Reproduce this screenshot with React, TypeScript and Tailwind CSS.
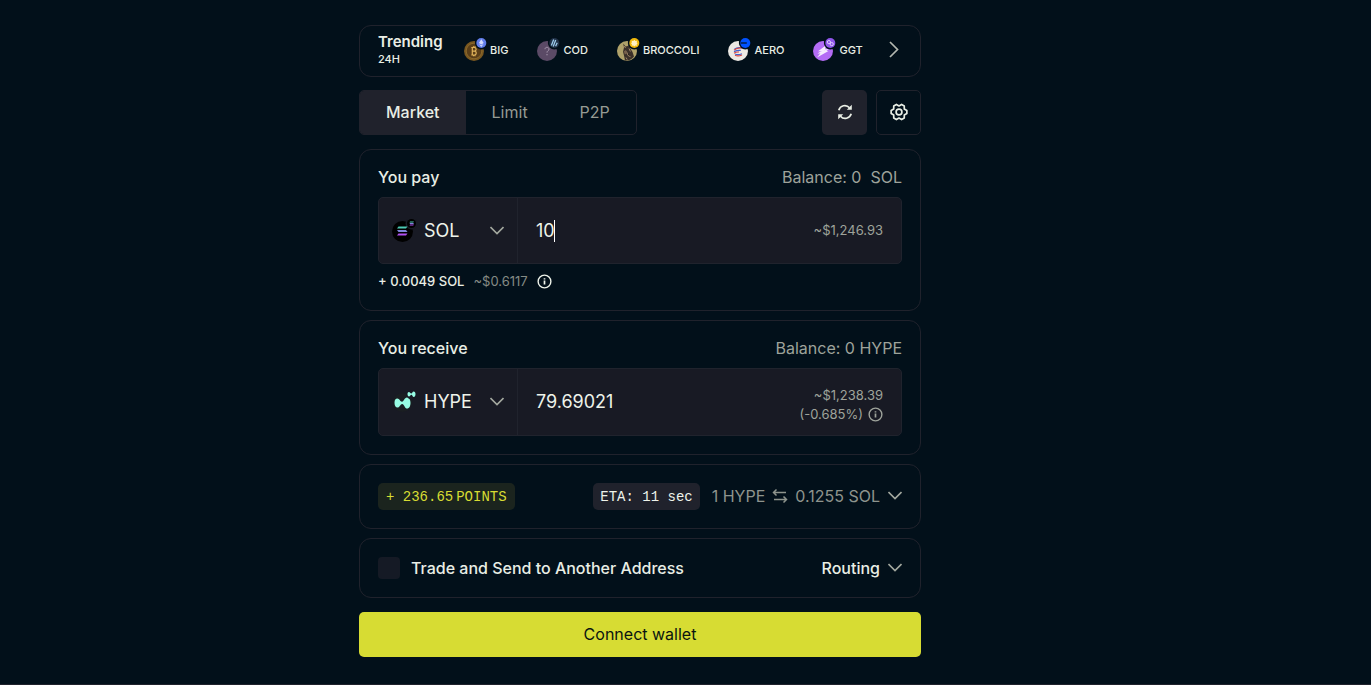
import React, { useState } from 'react';

const TABS = ['Market', 'Limit', 'P2P'];

function Chevron({ className = '' }: { className?: string }) {
  return (
    <svg className={`shrink-0 ${className}`} width="14" height="16" viewBox="0 0 14 16" fill="none" stroke="#a3a89f" strokeWidth="1.6" aria-hidden="true">
      <path d="M.5 4 7 10.5 13.5 4" />
    </svg>
  );
}

function InfoIcon({ size, color }: { size: number; color: string }) {
  return (
    <svg className="shrink-0" width={size} height={size} viewBox="0 0 16 16" fill="none" stroke={color} strokeWidth="1.5" aria-hidden="true">
      <circle cx="8" cy="8" r="6.8" />
      <path d="M8 7v4.3M8 4.4v1.5" strokeWidth="1.8" />
    </svg>
  );
}

// Round token logo with a small network badge cut into its top right corner
function TokenIcon({ children, badge, badgeColor }: { children: React.ReactNode; badge: React.ReactNode; badgeColor: string }) {
  return (
    <svg className="shrink-0" width="24" height="24" viewBox="0 0 24 24" aria-hidden="true">
      {children}
      <circle cx="17.3" cy="6" r="6.4" fill="#02101a" />
      <circle cx="17.3" cy="6" r="5" fill={badgeColor} />
      {badge}
    </svg>
  );
}

function BigIcon() {
  return (
    <TokenIcon badgeColor="#627eea" badge={<path d="M17.3 2.2 14.9 6l2.4 1.4L19.7 6zM15 6.9l2.3 3.1 2.3-3.1-2.3 1.3z" fill="#d5dcfb" />}>
      <circle cx="10" cy="14" r="10" fill="#7a5820" />
      <circle cx="10" cy="14" r="7.8" fill="#5a3e18" stroke="#8a682b" />
      <path d="M8.3 10.500v7.500M7.300 10.500h3a1.800 1.800 0 0 1 0 3.600H8.300h2.400a2 2 0 0 1 0 3.900H7.300M9.500 9.200v1.300M11 9.200v1.300M9.500 18v1.200M11 18v1.200" fill="none" stroke="#e0b35a" strokeWidth="1.200" />
    </TokenIcon>
  );
}

function CodIcon() {
  return (
    <TokenIcon badgeColor="#213147" badge={<path d="m14.4 8.6 2.3-6M16.2 9.5l2.5-6.5M18.6 9.2l1.6-3.4" stroke="#9dcced" strokeWidth="1.3" />}>
      <circle cx="10" cy="14" r="10" fill="#5b4a66" />
      <path d="M8 12.2c0-2.600 4-2.500 4 0 0 1.600-2 1.400-2 3.400M10 17v1.300" fill="none" stroke="#a89ab0" strokeWidth="1" />
    </TokenIcon>
  );
}

function BroccoliIcon() {
  return (
    <TokenIcon badgeColor="#f0b90b" badge={<path d="m17.3 2.8 1 1.3 1.8-.4-.5 1.5 1 1-1 1 .4 1.5-1.7-.3-1 1.2-1-1.2-1.7.3.4-1.5-1-1 1-1-.5-1.5 1.8.4z" fill="#fff1c2" />}>
      <circle cx="10" cy="14" r="10" fill="#b0a26a" />
      <path d="M6.200 6.500 8.600 9.500l2.200-.4 1.700-2.600.6 4.500 2.400 4 1.500 4.500a10 10 0 0 1-9 4L7 18.500l-1-3.800L7 10.500z" fill="#3b3029" />
      <path d="m7.300 9 1.200 2M9.500 14.500l1.600 4 2.400 1.200M12 11.500l1.400 3M9 20.500l1.200 2" stroke="#a58a6b" strokeWidth="1" />
      <path d="M6.800 14.200 9 13l1 3.400-2.200 1.200z" fill="#77604b" />
    </TokenIcon>
  );
}

function AeroIcon() {
  return (
    <TokenIcon badgeColor="#0052ff" badge={<path d="M13 6h5.8" stroke="#02101a" strokeWidth="1.2" />}>
      <circle cx="10" cy="14" r="10" fill="#ece9e4" />
      <path d="M6.500 12.200c2-1.800 4.500-2 7.500-1.400M6 14.600c2-1 4-1.500 6.800-1.200M7 17c2 1 4.500.8 7-.3" fill="none" stroke="#3d63d2" strokeWidth="1.200" />
      <path d="M6 13.200c2.200-2 4.700-2.600 8-2.300M6 16.200c1.400-1 3.200-1.400 5-1.200M7 18.200c2 1 4.500.8 7-.2" fill="none" stroke="#d9433f" strokeWidth="1.100" />
    </TokenIcon>
  );
}

function GgtIcon() {
  return (
    <TokenIcon
      badgeColor="#8f55ea"
      badge={
        <g fill="none" stroke="#e6d8fd" strokeWidth="0.9">
          <circle cx="15.9" cy="5.1" r="1.6" />
          <circle cx="18.7" cy="7.1" r="1.6" />
        </g>
      }
    >
      <circle cx="10" cy="14" r="10" fill="#b46cf5" />
      <path d="M13.500 8 5 14.200h4L4 20.500l11.500-6.500h-4z" fill="#f6eefe" />
      <path d="M9 12.200h6.800l-3 2.400zM4.500 16.600l3.500-2.400h3.500l-2 2.400z" fill="#f6eefe" />
    </TokenIcon>
  );
}

function SolBars() {
  return (
    <>
      <path d="M2 0h9L9.500 2H.5z" fill="#4cc9b4" />
      <path d="M.5 3.500h9L11 5.500H2z" fill="#7f84da" />
      <path d="M2 7h9L9.500 9H.5z" fill="#b24ff0" />
    </>
  );
}

function SolIcon() {
  return (
    <svg className="shrink-0" width="26" height="24" viewBox="0 0 26 24" aria-hidden="true">
      <circle cx="10.5" cy="12.5" r="10.5" fill="#000" />
      <circle cx="19.5" cy="4.5" r="6" fill="#181a24" />
      <circle cx="19.5" cy="4.5" r="4.5" fill="#000" />
      <g transform="translate(4.5 7.5)">
        <SolBars />
      </g>
      <g transform="translate(17.3 2.6) scale(0.42)">
        <SolBars />
      </g>
    </svg>
  );
}

function HypeShape() {
  return (
    <path d="M0 5.200C0 2.400 1.200 1 2.800 1c2.300 0 2.800 3.200 4.700 3.200C9.500 4.200 9.900 0 12.400 0 14.600 0 16 2.400 16 5.200 16 8.500 14.800 11 12.700 11 10.200 11 9.700 6.400 7.700 6.400 5.800 6.400 5.200 10 3 10 1.200 10 0 8.200 0 5.200z" fill="#97fce4" />
  );
}

function HypeIcon() {
  return (
    <svg className="shrink-0" width="26" height="24" viewBox="0 0 26 24" aria-hidden="true">
      <circle cx="10.5" cy="12.5" r="9.5" fill="#1a1e22" />
      <g transform="translate(2.5 7.5)">
        <HypeShape />
      </g>
      <circle cx="19.5" cy="4.5" r="5" fill="#181a24" />
      <g transform="translate(15.5 1.5) scale(0.5)">
        <HypeShape />
      </g>
    </svg>
  );
}

const TRENDING = [
  { symbol: 'BIG', icon: <BigIcon /> },
  { symbol: 'COD', icon: <CodIcon /> },
  { symbol: 'BROCCOLI', icon: <BroccoliIcon /> },
  { symbol: 'AERO', icon: <AeroIcon /> },
  { symbol: 'GGT', icon: <GgtIcon /> },
];

function TokenSelect({ symbol, icon }: { symbol: string; icon: React.ReactNode }) {
  return (
    <button type="button" className="flex w-[139px] shrink-0 items-center border-r border-[#20232d] px-[13px] text-lg text-[#eef3ea]">
      {icon}
      <span className="ml-1.5">{symbol}</span>
      <Chevron className="ml-auto" />
    </button>
  );
}

export default function App() {
  const [tab, setTab] = useState('Market');
  const [amount, setAmount] = useState('10');
  const [otherAddress, setOtherAddress] = useState(false);

  return (
    <div className="flex min-h-screen flex-col bg-[#02101a] font-['Inter','Liberation_Sans',sans-serif] text-base text-[#e9eee5]">
      <main className="flex flex-1 justify-center pt-[25px] pb-[27px] lg:pr-[91px]">
        <div className="w-full max-w-[562px]">
          <section className="flex h-[52px] items-center rounded-xl border border-[#20222c] px-[18px] pb-1">
            <div className="w-[86px] shrink-0">
              <h2 className="text-[15px] font-semibold leading-5">Trending</h2>
              <p className="text-[11px] font-medium leading-[14px]">24H</p>
            </div>
            <ul className="flex gap-[29px]">
              {TRENDING.map((t) => (
                <li key={t.symbol}>
                  <a href="#" className="flex items-center gap-0.5 text-[11px] font-medium">
                    {t.icon}
                    <span className="pt-0.5">{t.symbol}</span>
                  </a>
                </li>
              ))}
            </ul>
            <button type="button" aria-label="Next tokens" className="ml-auto">
              <svg width="18" height="18" viewBox="0 0 18 18" fill="none" stroke="#b4b8b0" strokeWidth="1.7">
                <path d="m6 2 7.500 7.500L6 17" />
              </svg>
            </button>
          </section>

          <div className="mt-[13px] flex items-center gap-[9px]">
            <div className="mr-auto flex h-[45px] overflow-hidden rounded-[5px] border border-[#20222c]">
              {TABS.map((name) => (
                <button
                  key={name}
                  type="button"
                  onClick={() => setTab(name)}
                  className={`px-[26px] pb-0.5 ${tab === name ? 'bg-[#20222c] font-medium' : 'text-[#969b93]'}`}
                >
                  {name}
                </button>
              ))}
            </div>
            <button type="button" aria-label="Refresh quote" className="flex size-[45px] items-center justify-center rounded-[5px] bg-[#20222c] pb-0.5">
              <svg width="18" height="18" viewBox="0 0 18 18" fill="none" stroke="#e9eee5" strokeWidth="1.7">
                <path d="M2.800 7.200A6.200 6.200 0 0 1 13.500 4.800M15.200 10.800A6.200 6.200 0 0 1 4.500 13.200" />
                <path d="M15.800 1.800v5h-5zM2.200 16.200v-5h5z" fill="#e9eee5" stroke="none" />
              </svg>
            </button>
            <button type="button" aria-label="Settings" className="flex size-[45px] items-center justify-center rounded-[5px] border border-[#20222c] pb-0.5">
              <svg width="18" height="18" viewBox="0 0 18 18" fill="none" stroke="#e9eee5" strokeWidth="1.7" strokeLinejoin="round">
                <path d="M16.850 7.470v3.060l-2.570 1.520-.03 2.990-2.650 1.520L9 15.100l-2.600 1.460-2.650-1.520-.03-2.990-2.570-1.520V7.470l2.570-1.520.03-2.990L6.400 1.440 9 2.900l2.600-1.460 2.650 1.520.03 2.990z" />
                <circle cx="9" cy="9" r="2.9" />
              </svg>
            </button>
          </div>

          <section className="mt-3.5 rounded-xl border border-[#20222c] px-[18px] pt-[15px] pb-[19px]">
            <div className="flex justify-between leading-6">
              <label htmlFor="pay-amount" className="font-medium">You pay</label>
              <span className="whitespace-pre text-[#9ea39b]">Balance: 0  SOL</span>
            </div>
            <div className="mt-2 flex h-[67px] rounded-[5px] border border-[#20232d] bg-[#181a24]">
              <TokenSelect symbol="SOL" icon={<SolIcon />} />
              <div className="relative flex min-w-0 flex-1 items-center pl-[18px]">
                <input
                  id="pay-amount"
                  inputMode="decimal"
                  value={amount}
                  onChange={(e) => setAmount(e.target.value)}
                  className="w-full text-lg text-[#eef3ea] outline-none"
                />
                <span className="absolute left-9 h-[22px] w-px bg-white" />
              </div>
              <span className="self-center pr-[18px] text-[13px] text-[#9ea39b]">~$1,246.93</span>
            </div>
            <p className="mt-[7px] flex items-center text-[13px] leading-5">
              <span className="font-medium">+ 0.0049 SOL</span>
              <span className="mr-[9px] ml-[9px] text-[#858b85]">~$0.6117</span>
              <InfoIcon size={15} color="#eef3ea" />
            </p>
          </section>

          <section className="mt-[9px] rounded-xl border border-[#20222c] px-[18px] pt-[15px] pb-[18px]">
            <div className="flex justify-between leading-6">
              <h2 className="font-medium">You receive</h2>
              <span className="text-[#9ea39b]">Balance: 0 HYPE</span>
            </div>
            <div className="mt-2 flex h-[68px] rounded-[5px] border border-[#20232d] bg-[#181a24]">
              <TokenSelect symbol="HYPE" icon={<HypeIcon />} />
              <output className="flex-1 self-center pl-[18px] text-lg text-[#eef3ea]">79.69021</output>
              <div className="flex flex-col items-end self-center pt-1.5 pr-[18px] text-[13px] leading-[19px] text-[#9ea39b]">
                <span>~$1,238.39</span>
                <span className="flex items-center gap-[5px]">
                  (-0.685%)
                  <InfoIcon size={15} color="#9ea39b" />
                </span>
              </div>
            </div>
          </section>

          <section className="mt-[9px] flex h-[65px] items-center rounded-xl border border-[#20222c] px-[18px]">
            <span className="mr-auto flex gap-[3px] rounded-[5px] bg-[#1b241e] px-2 pt-0.5 font-['Liberation_Mono',monospace] text-sm leading-[25px] text-[#d7dc33]">
              <span>+ 236.65</span>
              <span>POINTS</span>
            </span>
            <span className="rounded-[5px] bg-[#20222c] px-[7px] pt-0.5 font-['Liberation_Mono',monospace] text-sm leading-[25px] text-[#eef3ea]">
              ETA: 11 sec
            </span>
            <button type="button" className="ml-3 flex items-center pb-0.5 text-[#8e948d]">
              1 HYPE
              <svg className="mx-[7px]" width="16" height="16" viewBox="0 0 16 16" fill="none" stroke="#8e948d" strokeWidth="1.5">
                <path d="M4.500 1.500 1.500 4.500l3 3M1.500 4.500H14M11.500 8.500l3 3-3 3M14.500 11.500H2" />
              </svg>
              0.1255 SOL
              <Chevron className="ml-2" />
            </button>
          </section>

          <section className="mt-[9px] flex h-[60px] items-center justify-between rounded-xl border border-[#20222c] px-[18px] font-medium">
            <label className="flex items-center gap-[11px]">
              <input
                type="checkbox"
                checked={otherAddress}
                onChange={(e) => setOtherAddress(e.target.checked)}
                className="size-[22px] appearance-none rounded bg-[#151a25] checked:bg-[#d7dc33]"
              />
              Trade and Send to Another Address
            </label>
            <button type="button" className="flex items-center gap-2">
              Routing
              <Chevron />
            </button>
          </section>

          <button type="button" className="mt-3.5 h-[45px] w-full rounded-[5px] bg-[#d7dc33] pb-0.5 text-[#0a1410]">
            Connect wallet
          </button>
        </div>
      </main>
      <footer className="border-t border-[#20222c]" />
    </div>
  );
}
